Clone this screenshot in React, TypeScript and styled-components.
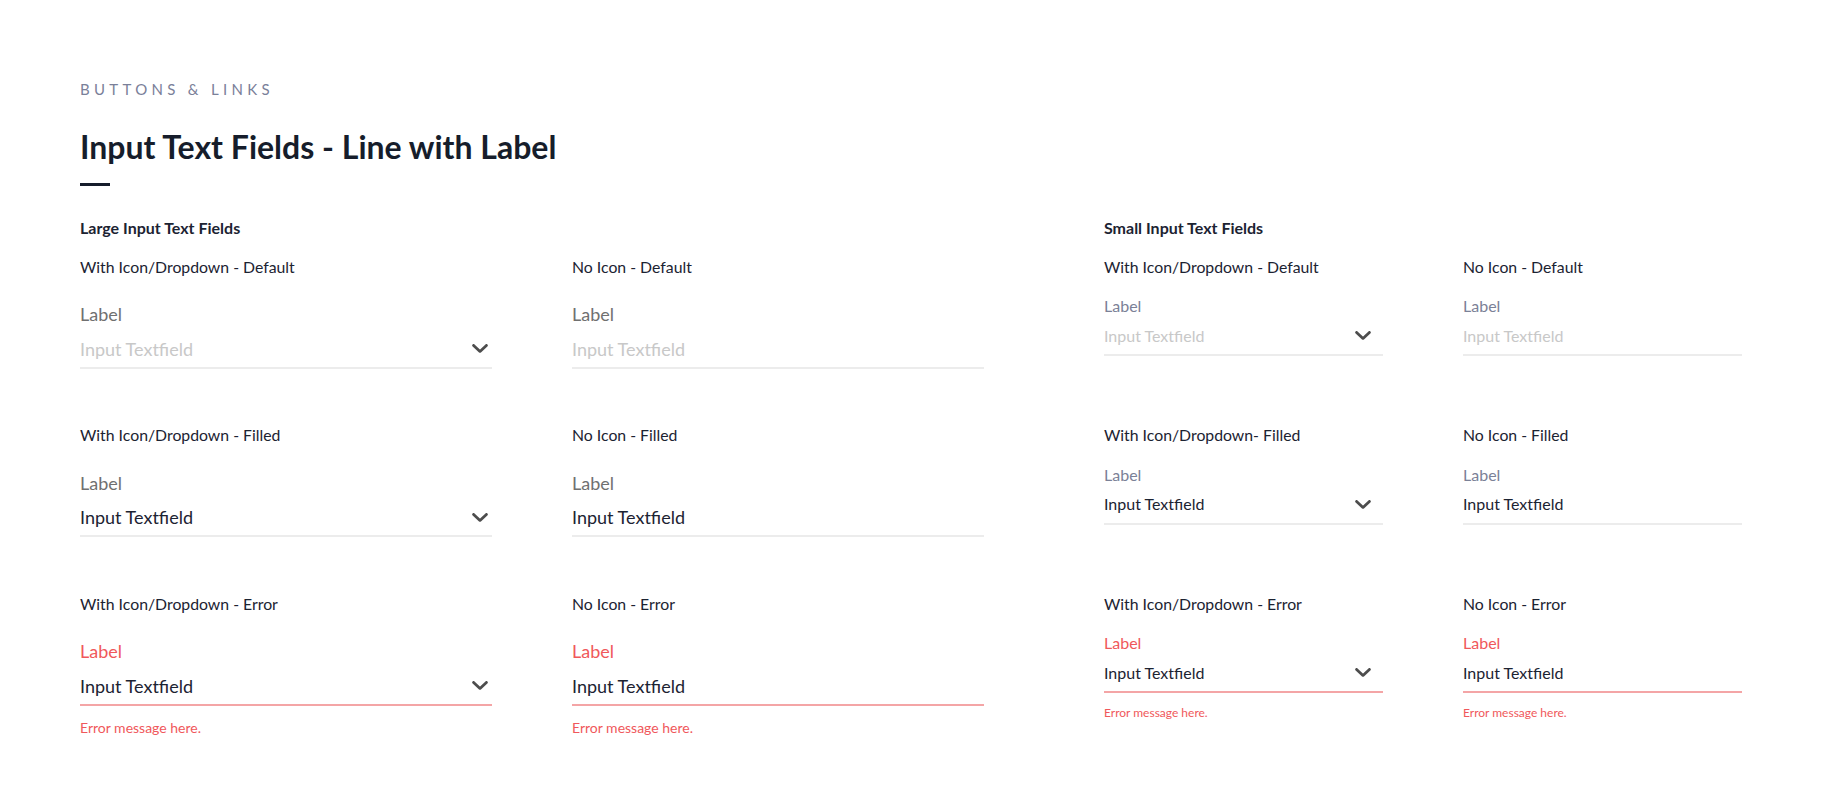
import React from "react";
import styled, { createGlobalStyle, css } from "styled-components";

type Size = "lg" | "sm";
type State = "default" | "filled" | "error";

const GlobalStyle = createGlobalStyle`
  html, body {
    margin: 0;
    padding: 0;
    background: #ffffff;
  }
  body {
    font-family: Lato, "Open Sans", Arial, sans-serif;
    color: #1c2332;
  }
`;

const Page = styled.div`
  width: 1822px;
  height: 801px;
  box-sizing: border-box;
  padding: 79px 0 0 80px;
`;

const Eyebrow = styled.div`
  font-size: 15px;
  line-height: 20px;
  letter-spacing: 4.3px;
  color: #7a8099;
  text-transform: uppercase;
`;

const Title = styled.h1`
  margin: 28px 0 0;
  font-size: 32px;
  line-height: 40px;
  font-weight: 700;
  color: #161d2b;
`;

const TitleBar = styled.div`
  margin-top: 16px;
  width: 30px;
  height: 3px;
  background: #161d2b;
`;

const Sections = styled.div`
  display: flex;
  column-gap: 120px;
  margin-top: 32px;
`;

const Section = styled.section`
  display: flex;
  flex-direction: column;
`;

const SectionTitle = styled.h2`
  margin: 0;
  font-size: 16px;
  line-height: 20px;
  font-weight: 700;
  color: #1c2332;
`;

const FieldGrid = styled.div<{ $col: number }>`
  display: grid;
  grid-template-columns: ${(p) => p.$col}px ${(p) => p.$col}px;
  column-gap: 80px;
  row-gap: 56.2px;
  grid-auto-rows: minmax(112.3px, auto);
  align-items: start;
  margin-top: 18.6px;
`;

const Cell = styled.div`
  display: flex;
  flex-direction: column;
`;

const Caption = styled.div`
  font-size: 15.8px;
  line-height: 20px;
  color: #1c2332;
`;

const FieldLabel = styled.div<{ $size: Size; $state: State }>`
  ${(p) =>
    p.$size === "lg"
      ? css`
          margin-top: 25.5px;
          font-size: 18px;
          line-height: 24px;
          color: #707070;
        `
      : css`
          margin-top: 19.8px;
          font-size: 16px;
          line-height: 20px;
          color: #7b8197;
        `}
  ${(p) => p.$state === "error" && css`color: #f0585b;`}
`;

const InputRow = styled.div<{ $size: Size; $state: State }>`
  display: flex;
  align-items: center;
  justify-content: space-between;
  border-bottom: 2px solid
    ${(p) => (p.$state === "error" ? "#f4a5a6" : "#ececec")};
  ${(p) =>
    p.$size === "lg"
      ? css`
          margin-top: 10.8px;
          padding-bottom: 6px;
          height: 24px;
          font-size: 18px;
          line-height: 24px;
        `
      : css`
          margin-top: 8.6px;
          padding-bottom: 7.4px;
          height: 22px;
          font-size: 16px;
          line-height: 22px;
        `}
`;

const Value = styled.span<{ $placeholder: boolean }>`
  color: ${(p) => (p.$placeholder ? "#c8c8c8" : "#1c2332")};
`;

const Chevron = styled.svg<{ $right: number }>`
  width: 16px;
  height: 9px;
  margin-right: ${(p) => p.$right}px;
  flex-shrink: 0;
`;

const ErrorText = styled.div<{ $size: Size }>`
  color: #f0585b;
  ${(p) =>
    p.$size === "lg"
      ? css`
          margin-top: 12.8px;
          font-size: 14px;
          line-height: 18px;
        `
      : css`
          margin-top: 12px;
          font-size: 12px;
          line-height: 16px;
        `}
`;

const ChevronIcon = ({ right }: { right: number }) => (
  <Chevron $right={right} viewBox="0 0 16 9" fill="none">
    <path
      d="M1.6 1.4 L8 7.4 L14.4 1.4"
      stroke="#4d4d4d"
      strokeWidth="2.8"
      strokeLinecap="round"
      strokeLinejoin="round"
    />
  </Chevron>
);

type FieldSpec = {
  caption: string;
  state: State;
  icon: boolean;
};

const Field = ({ caption, state, icon, size }: FieldSpec & { size: Size }) => (
  <Cell>
    <Caption>{caption}</Caption>
    <FieldLabel $size={size} $state={state}>
      Label
    </FieldLabel>
    <InputRow $size={size} $state={state}>
      <Value $placeholder={state === "default"}>Input Textfield</Value>
      {icon && <ChevronIcon right={size === "lg" ? 4.5 : 12} />}
    </InputRow>
    {state === "error" && <ErrorText $size={size}>Error message here.</ErrorText>}
  </Cell>
);

const largeFields: FieldSpec[] = [
  { caption: "With Icon/Dropdown - Default", state: "default", icon: true },
  { caption: "No Icon - Default", state: "default", icon: false },
  { caption: "With Icon/Dropdown - Filled", state: "filled", icon: true },
  { caption: "No Icon - Filled", state: "filled", icon: false },
  { caption: "With Icon/Dropdown - Error", state: "error", icon: true },
  { caption: "No Icon - Error", state: "error", icon: false },
];

const smallFields: FieldSpec[] = [
  { caption: "With Icon/Dropdown - Default", state: "default", icon: true },
  { caption: "No Icon - Default", state: "default", icon: false },
  { caption: "With Icon/Dropdown- Filled", state: "filled", icon: true },
  { caption: "No Icon - Filled", state: "filled", icon: false },
  { caption: "With Icon/Dropdown - Error", state: "error", icon: true },
  { caption: "No Icon - Error", state: "error", icon: false },
];

export default function App() {
  return (
    <>
      <GlobalStyle />
      <Page>
        <Eyebrow>Buttons &amp; Links</Eyebrow>
        <Title>Input Text Fields - Line with Label</Title>
        <TitleBar />
        <Sections>
          <Section>
            <SectionTitle>Large Input Text Fields</SectionTitle>
            <FieldGrid $col={412}>
              {largeFields.map((f) => (
                <Field key={f.caption} {...f} size="lg" />
              ))}
            </FieldGrid>
          </Section>
          <Section>
            <SectionTitle>Small Input Text Fields</SectionTitle>
            <FieldGrid $col={279}>
              {smallFields.map((f) => (
                <Field key={f.caption} {...f} size="sm" />
              ))}
            </FieldGrid>
          </Section>
        </Sections>
      </Page>
    </>
  );
}
